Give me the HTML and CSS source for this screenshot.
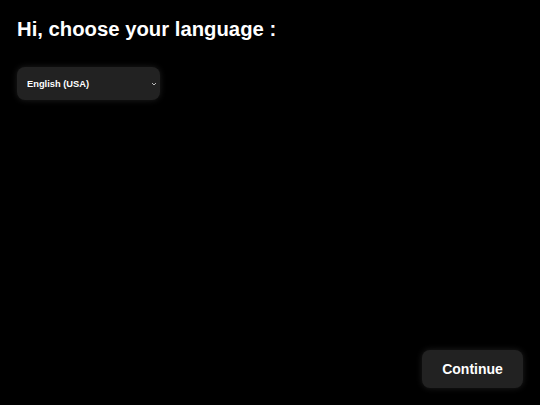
FILE: index.html
```html
<!DOCTYPE html>
<html>
<head>
<meta charset="utf-8">
<link rel="stylesheet" href="styles.css">
</head>
<body>
<div class="page">
  <h1 class="title">Hi, choose your language :</h1>
  <div class="select-wrap">
    <select class="select">
      <option>English (USA)</option>
    </select>
    <svg class="chevron" width="6" height="4" viewBox="0 0 6 4"><path d="M1 1l2 2 2-2" fill="none" stroke="#bbb" stroke-width="1"/></svg>
  </div>
  <div class="spacer"></div>
  <div class="actions">
    <button class="btn">Continue</button>
  </div>
</div>
</body>
</html>
```
FILE: styles.css
```css
html, body {
  margin: 0;
  background: #000;
  height: 100%;
}
.page {
  box-sizing: border-box;
  height: 405px;
  padding: 17px;
  display: flex;
  flex-direction: column;
  font-family: "Liberation Sans", Arial, sans-serif;
  color: #fff;
}
.title {
  margin: 0;
  font-size: 20.3px;
  font-weight: 700;
  line-height: 24px;
}
.select-wrap {
  position: relative;
  width: 143px;
  margin-top: 26px;
}
.select {
  appearance: none;
  -webkit-appearance: none;
  width: 143px;
  height: 33px;
  border: none;
  border-radius: 8px;
  background: #222;
  color: #fff;
  font-family: "Liberation Sans", Arial, sans-serif;
  font-size: 9.3px;
  font-weight: 700;
  padding: 0 10px;
  box-shadow: 0 0 6px rgba(255,255,255,0.12);
  outline: none;
}
.chevron {
  position: absolute;
  right: 3px;
  top: 15px;
}
.spacer {
  flex: 1;
}
.actions {
  display: flex;
  justify-content: flex-end;
}
.btn {
  width: 101px;
  height: 38px;
  border: none;
  border-radius: 8px;
  background: #222;
  color: #fff;
  font-family: "Liberation Sans", Arial, sans-serif;
  font-size: 14px;
  font-weight: 700;
  box-shadow: 0 0 6px rgba(255,255,255,0.12);
}
```
